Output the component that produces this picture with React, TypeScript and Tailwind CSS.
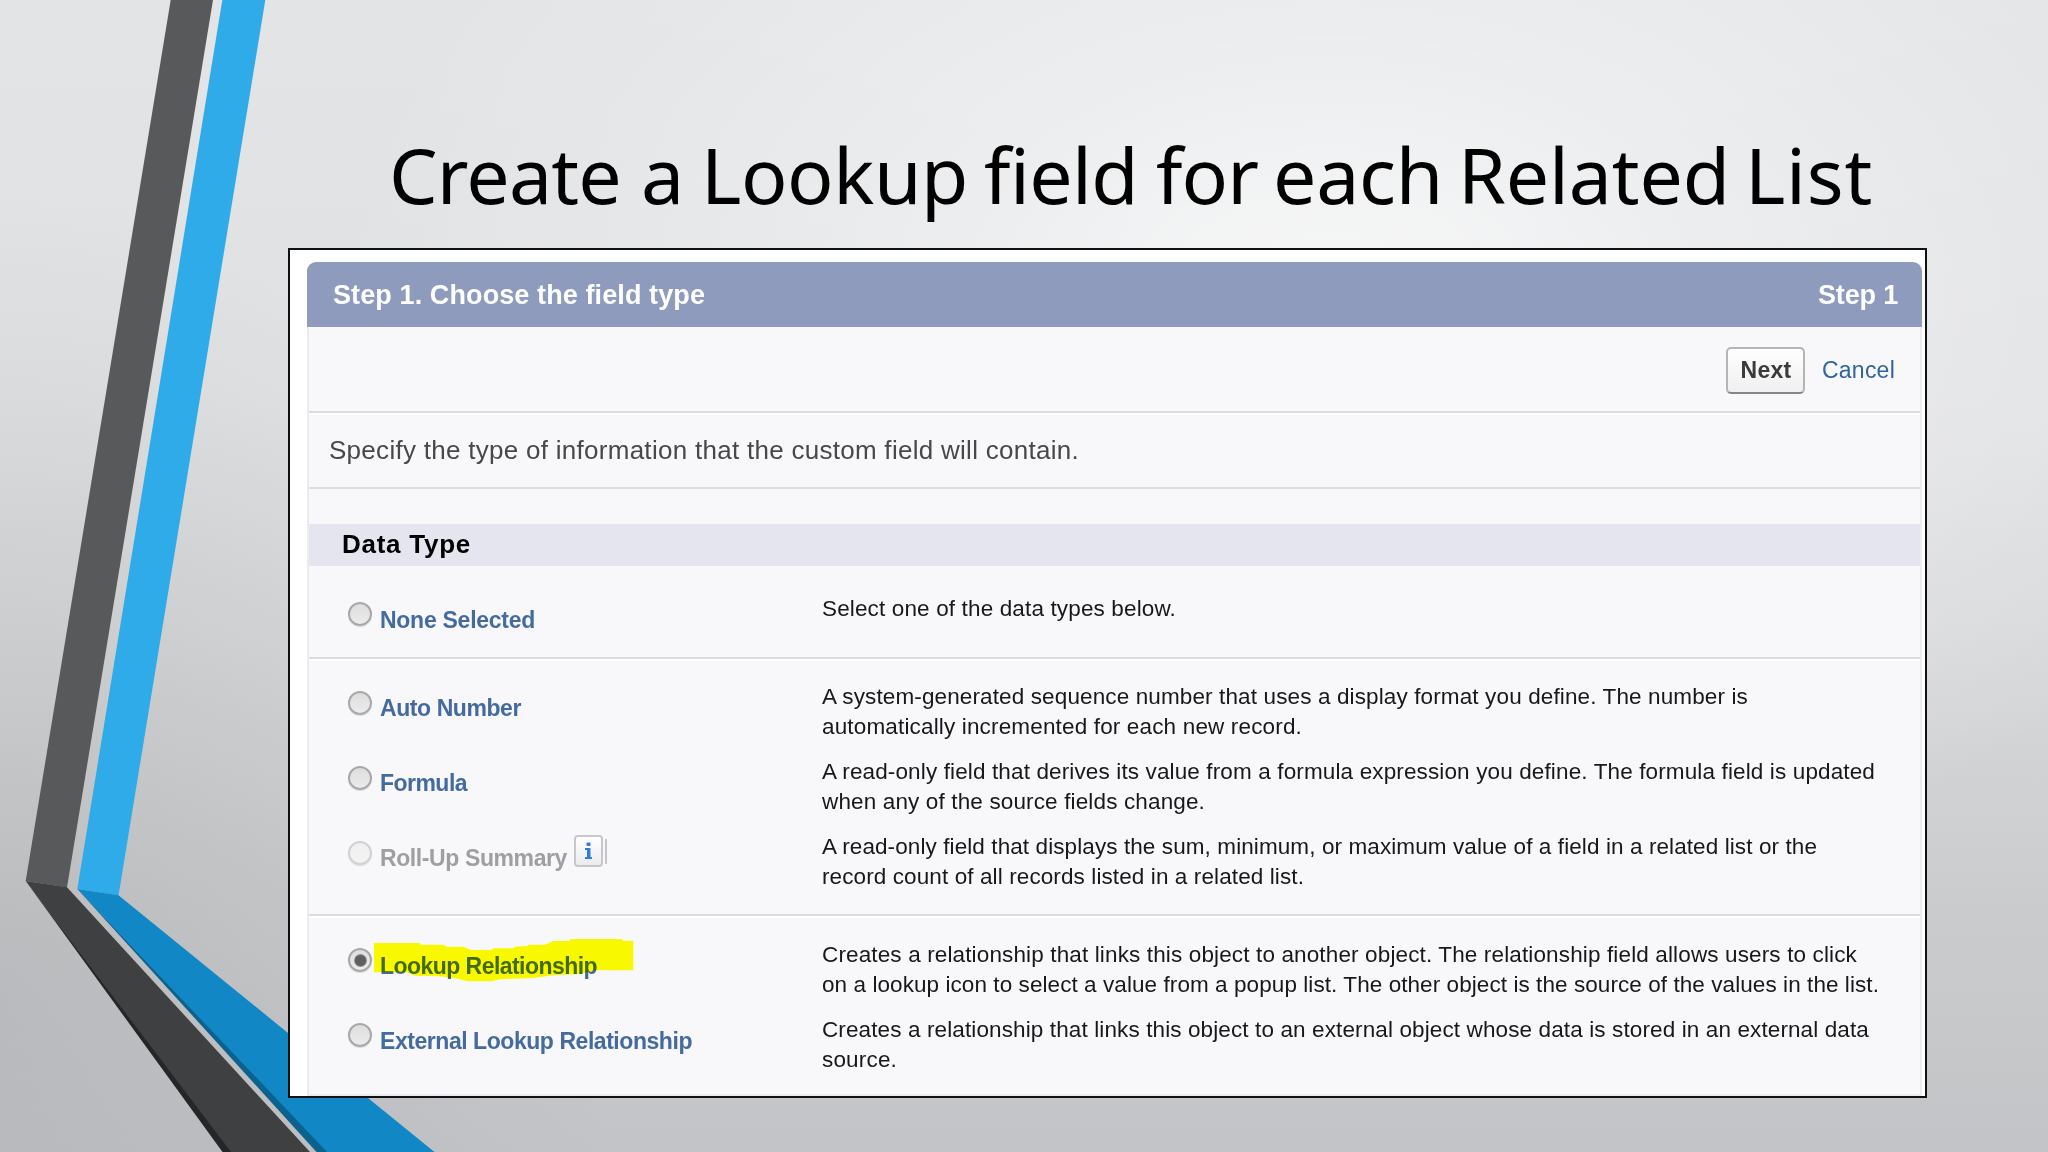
import { useLayoutEffect, useRef, useState } from "react";

type FitProps = { text: string; className?: string };

// Spreads the letters so that the text fills the width of its box
function FitText({ text, className = "" }: FitProps) {
  const box = useRef<HTMLSpanElement>(null);
  const inner = useRef<HTMLSpanElement>(null);
  const [spacing, setSpacing] = useState(0);

  useLayoutEffect(() => {
    if (!box.current || !inner.current) return;
    inner.current.style.letterSpacing = "0px";
    const natural = inner.current.getBoundingClientRect().width;
    const target = box.current.getBoundingClientRect().width;
    const next = (target - natural) / text.length;
    inner.current.style.letterSpacing = `${next}px`;
    setSpacing(next);
  }, [text]);

  return (
    <span ref={box} className={`block whitespace-nowrap ${className}`}>
      <span ref={inner} style={{ letterSpacing: spacing }}>{text}</span>
    </span>
  );
}

const titleWords = [
  { text: "Create", className: "w-[232px]" },
  { text: "a", className: "ml-[20px] w-[43px]" },
  { text: "Lookup", className: "ml-[17px] w-[267px]" },
  { text: "field", className: "ml-[16px] w-[154px]" },
  { text: "for", className: "ml-[18px] w-[102px]" },
  { text: "each", className: "ml-[15px] w-[170px]" },
  { text: "Related", className: "ml-[15px] w-[272px]" },
  { text: "List", className: "ml-[15px] w-[128px]" },
];

type Row = {
  label: string;
  labelWidth: string;
  lines: { text: string; className: string }[];
  selected?: boolean;
  disabled?: boolean;
};

const noneRows: Row[] = [
  {
    label: "None Selected",
    labelWidth: "w-[155px]",
    lines: [{ text: "Select one of the data types below.", className: "w-[354px]" }],
  },
];

const computedRows: Row[] = [
  {
    label: "Auto Number",
    labelWidth: "w-[141px]",
    lines: [
      { text: "A system-generated sequence number that uses a display format you define. The number is", className: "w-[926px]" },
      { text: "automatically incremented for each new record.", className: "w-[480px]" },
    ],
  },
  {
    label: "Formula",
    labelWidth: "w-[87px]",
    lines: [
      { text: "A read-only field that derives its value from a formula expression you define. The formula field is updated", className: "w-[1053px]" },
      { text: "when any of the source fields change.", className: "w-[383px]" },
    ],
  },
  {
    label: "Roll-Up Summary",
    labelWidth: "w-[187px]",
    disabled: true,
    lines: [
      { text: "A read-only field that displays the sum, minimum, or maximum value of a field in a related list or the", className: "w-[995px]" },
      { text: "record count of all records listed in a related list.", className: "w-[482px]" },
    ],
  },
];

const relationRows: Row[] = [
  {
    label: "Lookup Relationship",
    labelWidth: "w-[217px]",
    selected: true,
    lines: [
      { text: "Creates a relationship that links this object to another object. The relationship field allows users to click", className: "w-[1035px]" },
      { text: "on a lookup icon to select a value from a popup list. The other object is the source of the values in the list.", className: "w-[1057px]" },
    ],
  },
  {
    label: "External Lookup Relationship",
    labelWidth: "w-[312px]",
    lines: [
      { text: "Creates a relationship that links this object to an external object whose data is stored in an external data", className: "w-[1047px]" },
      { text: "source.", className: "w-[75px]" },
    ],
  },
];

function Radio({ selected, disabled }: { selected?: boolean; disabled?: boolean }) {
  return (
    <span
      className={`flex size-6 shrink-0 items-center justify-center rounded-full border-2 bg-linear-to-b shadow-[0_1px_1px_rgba(0,0,0,0.12)] ${
        disabled ? "border-[#d2d2d4] from-[#f0f0f1] to-[#f3f3f4]" : "border-[#a8a8aa] from-[#dededf] to-[#ebebec]"
      }`}
    >
      {selected && <span className="size-[11px] rounded-full bg-[#5f5f60] shadow-[0_0_0_1px_#8f8f90]" />}
    </span>
  );
}

function InfoButton() {
  return (
    <span className="-mt-[8px] ml-[7px] flex h-[32px] items-center gap-[2px]">
      <span className="flex h-[32px] w-[29px] items-center justify-center rounded-[4px] border-2 border-[#c6c6cb] bg-linear-to-b from-white to-[#ececef]">
        <svg width="9" height="18" viewBox="0 0 9 18" fill="#2f7de0">
          <rect x="2.5" y="0.5" width="4" height="3.5" rx="1" />
          <path d="M1 6h5.5v9H8v2H1v-2h2V8H1z" />
        </svg>
      </span>
      <span className="h-[25px] w-[2px] bg-[#c6c6ca]" />
    </span>
  );
}

// Marker stroke over the chosen option
function Highlight() {
  return (
    <svg className="pointer-events-none absolute -top-[12px] -left-[6px] mix-blend-multiply" width="260" height="43" viewBox="282 145 780 129">
      <path
        fill="#ffff00"
        d="M282 157H420L422 162H493L497 168H550L572 178H635L640 173H700L705 168L742 166L745 162H795L820 151H868L872 145H1025L1030 150H1060V239H945L900 250L820 254L760 262L660 266L635 272H565L525 263L480 257L405 255L380 245H282Z"
      />
    </svg>
  );
}

function TypeRow({ row, radioClass }: { row: Row; radioClass: string }) {
  return (
    <div className="flex">
      <div className="flex w-[474px] shrink-0 items-start">
        <span className={radioClass}>
          <Radio selected={row.selected} disabled={row.disabled} />
        </span>
        <div className="relative mt-[11px] ml-[8px] flex">
          <FitText
            text={row.label}
            className={`text-[23px] leading-[30px] font-bold ${row.labelWidth} ${row.disabled ? "text-[#9f9fa2]" : "text-[#446b9f]"}`}
          />
          {row.selected && <Highlight />}
          {row.disabled && <InfoButton />}
        </div>
      </div>
      <div className="text-[22.5px] leading-[30px] text-[#17171c]">
        {row.lines.map((l) => (
          <FitText key={l.text} text={l.text} className={l.className} />
        ))}
      </div>
    </div>
  );
}

function Ribbons() {
  return (
    <svg className="absolute inset-0" width="2048" height="1152" viewBox="0 0 2048 1152">
      <path fill="#58595b" d="M170.7 0H213L67 887.5L25.7 881Z" />
      <path fill="#3f4042" d="M25.7 881L67 887.3L310 1152H230Z" />
      <path fill="#252628" d="M25.7 881L231 1152H222.5Z" />
      <path fill="#30abea" d="M222.3 0H265.3L118.5 895.5L77.3 889Z" />
      <path fill="#1287c6" d="M77.3 889L118.5 895.3L434.5 1152H326Z" />
      <path fill="#0b628f" d="M77.3 889L327 1152H316.5Z" />
    </svg>
  );
}

export default function App() {
  return (
    <div className="relative h-[1152px] w-[2048px] overflow-hidden bg-[radial-gradient(ellipse_1000px_620px_at_1330px_300px,rgba(255,255,255,0.75),rgba(255,255,255,0.33)_45%,transparent),radial-gradient(ellipse_620px_800px_at_0px_1000px,rgba(165,168,172,0.45),transparent),linear-gradient(to_bottom,#e2e4e6_0%,#e0e1e3_35%,#d8d9da_55%,#cbcccd_78%,#c3c4c7_100%)] font-['Liberation_Sans',Arial,sans-serif]">
      <Ribbons />
      <div className="relative flex h-full flex-col pl-[288px]">
        <h1 className="flex h-[248px] shrink-0 pt-[121px] pl-[101px] font-['Noto_Sans','Open_Sans',sans-serif] text-[77px] leading-[108px] text-black">
          {titleWords.map((w) => (
            <FitText key={w.text} text={w.text} className={w.className} />
          ))}
        </h1>

        <div className="flex h-[850px] w-[1639px] shrink-0 flex-col border-2 border-[#111114] bg-white pt-[12px] pr-[3px] pl-[17px]">
          <div className="flex h-[65px] shrink-0 items-center justify-between rounded-t-[9px] bg-[#8e9bbd] pt-[2px] pr-[24px] pl-[26px] text-[27px] font-bold text-white">
            <FitText text="Step 1. Choose the field type" className="w-[372px]" />
            <FitText text="Step 1" className="w-[80px]" />
          </div>

          <div className="flex flex-1 flex-col border-x-2 border-b-2 border-[#ececf0] bg-[#f8f8fa]">
            <div className="flex h-[86px] shrink-0 items-center justify-end border-b-2 border-[#dcdce0] pt-[3px] pr-[25px] text-[23px]">
              <button className="mr-[17px] flex h-[47px] w-[79px] items-center justify-center rounded-[5px] border-2 border-[#b5b5b8] border-b-[#858588] bg-linear-to-b from-white to-[#efefef] font-bold text-[#3b3b3e]">
                <FitText text="Next" className="-mt-px ml-px w-[51px]" />
              </button>
              <a className="-mt-px text-[#2f659f]">
                <FitText text="Cancel" className="w-[73px]" />
              </a>
            </div>

            <div className="flex h-[76px] shrink-0 items-center border-b-2 border-[#dcdce0] pt-px pl-[20px] text-[26px] text-[#48484c] shadow-[inset_0_2px_0_#fff]">
              <FitText text="Specify the type of information that the custom field will contain." className="w-[750px]" />
            </div>

            <div className="mt-[35px] flex h-[42px] shrink-0 items-center bg-[#e4e5ef] pb-px pl-[33px] text-[26px] font-bold text-black">
              <FitText text="Data Type" className="w-[129px]" />
            </div>

            <div className="h-[93px] shrink-0 border-b-2 border-[#dcdce0] pt-[28px] pl-[39px]">
              {noneRows.map((row) => (
                <TypeRow key={row.label} row={row} radioClass="mt-[8px]" />
              ))}
            </div>

            <div className="flex h-[257px] shrink-0 flex-col gap-[15px] border-b-2 border-[#dcdce0] pt-[23px] pl-[39px] shadow-[inset_0_2px_0_#fff]">
              {computedRows.map((row) => (
                <TypeRow key={row.label} row={row} radioClass="mt-[9px]" />
              ))}
            </div>

            <div className="flex flex-col gap-[15px] pt-[24px] pl-[39px] shadow-[inset_0_2px_0_#fff]">
              {relationRows.map((row) => (
                <TypeRow key={row.label} row={row} radioClass="mt-[8px]" />
              ))}
            </div>
          </div>
        </div>
      </div>
    </div>
  );
}
